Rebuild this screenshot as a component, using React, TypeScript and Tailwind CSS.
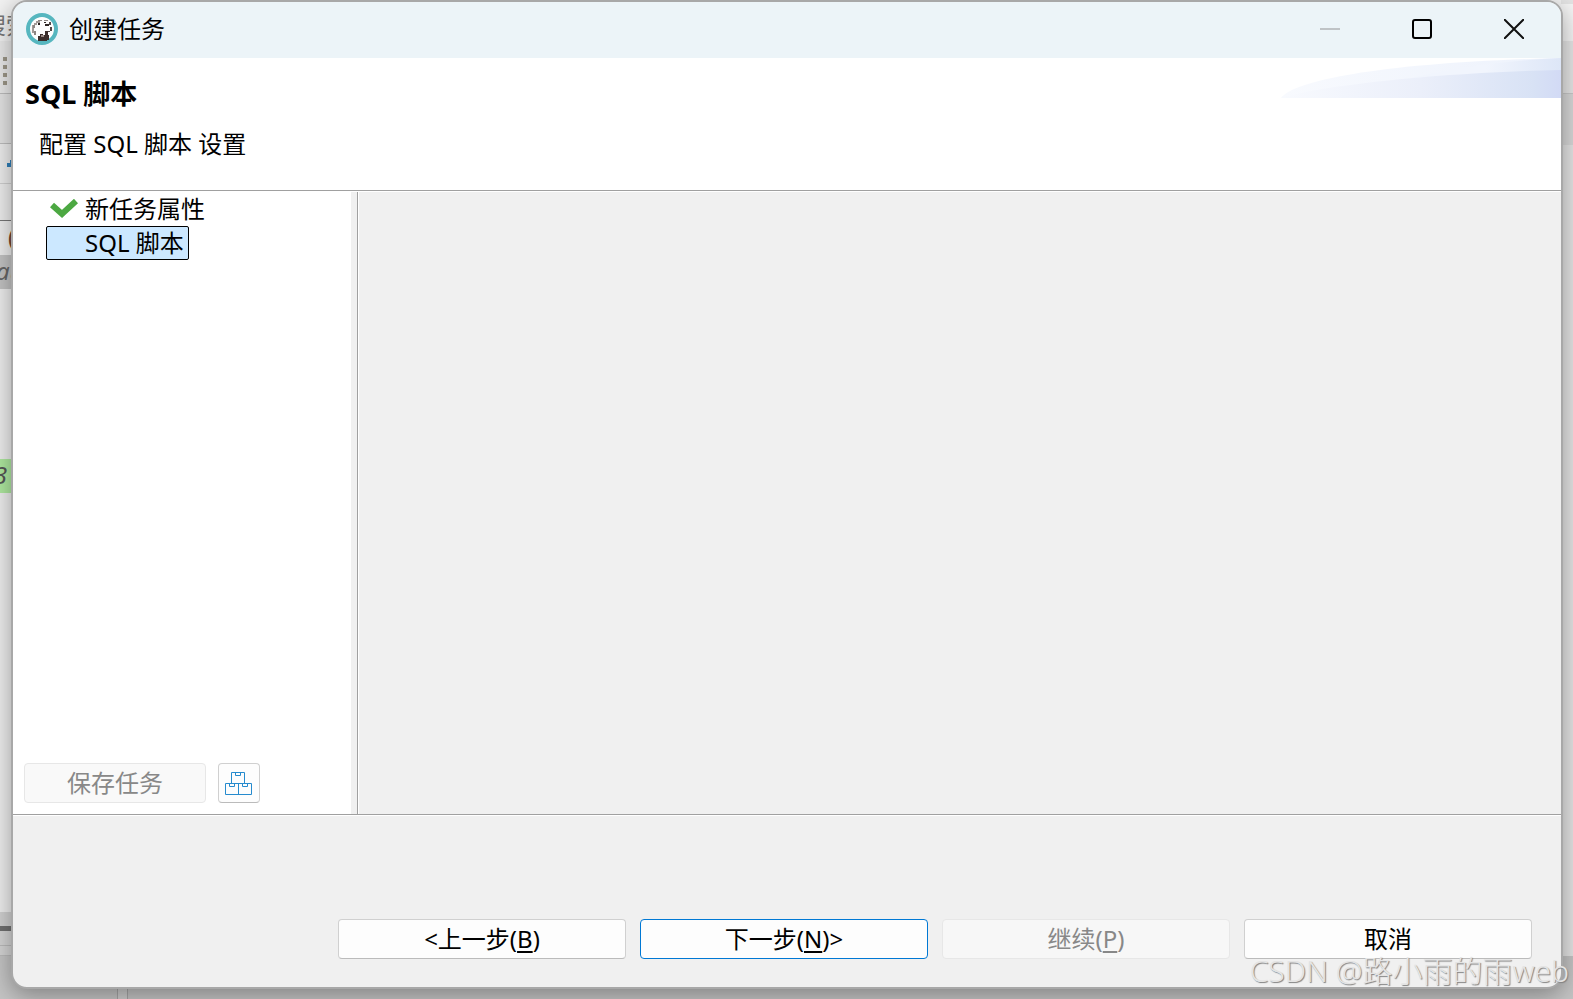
import React from 'react';

const TREE_ITEMS = [
  { label: '新任务属性', done: true },
  { label: 'SQL 脚本', done: false },
];

const FOOTER_BUTTONS = [
  { before: '<上一步(', key: 'B', after: ')', style: 'border-[#d0d0d0] border-b-[#bbbbbb] bg-[#fdfdfd]', disabled: false },
  { before: '下一步(', key: 'N', after: ')>', style: 'border-[#0078d4] bg-[#fdfdfd]', disabled: false },
  { before: '继续(', key: 'P', after: ')', style: 'border-[#e7e7e7] bg-[#f7f7f7] text-[#888888]', disabled: true },
  { before: '取消', key: '', after: '', style: 'border-[#d0d0d0] border-b-[#bbbbbb] bg-[#fdfdfd]', disabled: false },
];

const AppIcon: React.FC = () => (
  <svg width="32" height="32" viewBox="0 0 32 32" aria-hidden="true">
    <circle cx="16" cy="16" r="14" fill="#fdfdfd" stroke="#56b6bf" strokeWidth="4" />
    <path d="M6 12h2v-2h2v-2h4v2h-3v2h-2v3h-1v5h-2z" fill="#a39a97" />
    <path d="M7 12h2v3h-2zM12 7h4v1h-4zM18 7h4v1h-4zM8 18h2v4h-2z" fill="#8d8683" />
    <path d="M12 10h2v2h-2zM19 11h4v2h-4zM18 9h2v1h-2z" fill="#2d2524" />
    <path d="M12 28v-5h2v-2h3v1h2v-4h3v4h1v5h-2v1z" fill="#3b2d2b" />
    <path d="M23 9h2v3h-2zM24 14h2v4h-2zM22 18h2v1h-2z" fill="#514846" />
    <path d="M15 22h3v2h-3z" fill="#998984" />
  </svg>
);

const BoxesIcon: React.FC = () => (
  <svg width="28" height="24" viewBox="0 0 28 24" fill="none" stroke="#268bce" strokeWidth="1" aria-hidden="true">
    <path d="M6.500 12V1.500h13V12M0.500 12.500h26v11H0.500zM13.500 12.500v11" />
    <path d="M10.500 2v2.500h5V2M4.500 13v2.500h5V13M17.500 13v2.500h5V13" />
  </svg>
);

// The editor that stays visible around the dialog
const Backdrop: React.FC = () => (
  <div className="flex h-full flex-col overflow-hidden bg-[#ededed] whitespace-nowrap" aria-hidden="true">
    <div className="flex flex-1">
      <div className="flex flex-1 flex-col">
        <div className="flex h-[41px] shrink-0 items-center bg-[#f2f2f2]">
          <span className="-ml-[18px] pt-2 text-[#777777]">搜索</span>
        </div>
        <div className="flex h-[53px] shrink-0 flex-col gap-1 border-b border-[#bdbdbd] bg-[#e9e9e9] pt-4 pl-[3px]">
          <span className="size-1 bg-[#9c9788]" />
          <span className="size-1 bg-[#9c9788]" />
          <span className="size-1 bg-[#9c9788]" />
          <span className="size-1 bg-[#9c9788]" />
        </div>
        <div className="h-[50px] shrink-0 border-b border-[#bdbdbd] bg-[#e4e4e4]" />
        <div className="h-10 shrink-0 border-b border-[#cfcfcf] pt-4 pl-[7px]">
          <div className="ml-[3px] h-[3px] w-2 bg-[#2f7fb8]" />
          <div className="h-1 w-2 bg-[#2f7fb8]" />
        </div>
        <div className="h-[37px] shrink-0 border-b border-[#777777]" />
        <div className="h-[34px] shrink-0 pl-2 text-[#70452e]">(</div>
        <div className="h-[34px] shrink-0 bg-[#c2c2c2] text-[#666666] italic">
          <span className="-ml-1">au</span>
        </div>
        <div className="h-[170px] shrink-0" />
        <div className="h-[34px] shrink-0 bg-[#aee89f] text-[#555555] italic">
          <span className="-ml-[6px]">3</span>
        </div>
        <div className="flex-1" />
        <div className="h-[14px] shrink-0 bg-[#d0d0d0]" />
        <div className="h-[5px] shrink-0 bg-[#707070]" />
        <div className="h-[15px] shrink-0 border-b border-[#bababa] bg-[#d4d4d4]" />
        <div className="h-[10px] shrink-0 border-b border-[#bababa] bg-[#d4d4d4]" />
      </div>
      <div className="flex w-3 flex-col bg-[#e4e4e4]">
        <div className="h-1 bg-[#e4e4e4]" />
        <div className="h-[37px] bg-[#f5f5f5]" />
        <div className="h-[53px] border-b border-[#c8c8c8] bg-[#e6e6e6]" />
        <div className="h-[51px] bg-[#d8d8d8]" />
      </div>
    </div>
    <div className="flex h-[43px] shrink-0 bg-[#c4c4c4]">
      <div className="w-[118px] border-r border-[#a5a5a5]" />
      <div className="w-[10px] border-r border-[#a5a5a5] bg-[#cccccc]" />
    </div>
  </div>
);

const TitleBar: React.FC = () => (
  <header className="flex h-14 shrink-0 items-center bg-[#ecf4f8] pr-px pb-[2px] pl-[13px]">
    <AppIcon />
    <h1 className="ml-[11px] flex-1">创建任务</h1>
    <button type="button" disabled aria-label="最小化" className="flex h-[54px] w-[92px] items-center justify-center">
      <svg width="20" height="20" viewBox="0 0 20 20" stroke="#bfc3c6" strokeWidth="2" aria-hidden="true">
        <path d="M0 10h20" />
      </svg>
    </button>
    <button type="button" aria-label="最大化" className="flex h-[54px] w-[92px] items-center justify-center">
      <svg width="20" height="20" viewBox="0 0 20 20" fill="none" stroke="#000000" strokeWidth="2" aria-hidden="true">
        <rect x="1" y="1" width="18" height="18" rx="2" />
      </svg>
    </button>
    <button type="button" aria-label="关闭" className="flex h-[54px] w-[92px] items-center justify-center">
      <svg width="20" height="20" viewBox="0 0 20 20" stroke="#111111" strokeWidth="2" aria-hidden="true">
        <path d="M0 0l20 20M20 0L0 20" />
      </svg>
    </button>
  </header>
);

const WizardHeader: React.FC = () => (
  <section className="flex h-[133px] shrink-0 justify-between border-b border-[#a0a0a0] bg-white">
    <div className="pt-5 pl-3">
      <h2 className="text-[27px] leading-8 font-bold">SQL 脚本</h2>
      <p className="mt-[18px] pl-[14px]">配置 SQL 脚本 设置</p>
    </div>
    <svg width="280" height="40" viewBox="0 0 280 40" aria-hidden="true">
      <defs>
        <linearGradient id="outer">
          <stop offset="0" stopColor="#f8fafe" />
          <stop offset="1" stopColor="#edf2fc" />
        </linearGradient>
        <linearGradient id="middle">
          <stop offset="0.500" stopColor="#f1f5fd" />
          <stop offset="1" stopColor="#dde6f7" />
        </linearGradient>
        <linearGradient id="inner">
          <stop offset="0" stopColor="#f8fafe" />
          <stop offset="0.500" stopColor="#ebeffa" />
          <stop offset="0.900" stopColor="#d8e2f5" />
          <stop offset="1" stopColor="#d2daf5" />
        </linearGradient>
      </defs>
      <path d="M0 40C14 21 112 4 280 0V40z" fill="url(#outer)" />
      <path d="M130 20C175 9 220 3 280 0V40H130z" fill="url(#middle)" />
      <path d="M0 40C30 30 140 15 280 12V40z" fill="url(#inner)" />
    </svg>
  </section>
);

const Sidebar: React.FC = () => (
  <aside className="flex w-[338px] shrink-0 flex-col justify-between bg-white">
    <ul className="flex flex-col items-start pl-[33px]">
      {TREE_ITEMS.map((item) => (
        <li key={item.label}>
          <button
            type="button"
            className={
              item.done
                ? 'flex h-[34px] items-center px-1'
                : 'flex h-[34px] items-center rounded-xs border border-black bg-[#cce8ff] pr-1 pl-[3px]'
            }
          >
            <span className="w-[35px]">
              {item.done && (
                <svg width="28" height="20" viewBox="0 0 28 20" fill="none" stroke="#4ca842" strokeWidth="6" aria-hidden="true">
                  <path d="M2 6l10 9L26 2" />
                </svg>
              )}
            </span>
            {item.label}
          </button>
        </li>
      ))}
    </ul>
    <div className="flex gap-3 pb-[11px] pl-[11px]">
      <button type="button" disabled className="h-10 w-[182px] rounded-sm border border-[#e7e7e7] bg-[#f9f9f9] text-[#888888]">
        保存任务
      </button>
      <button
        type="button"
        aria-label="任务分组"
        className="flex h-10 w-[42px] items-center justify-center rounded-sm border border-[#d0d0d0] border-b-[#bbbbbb] bg-[#fdfdfd]"
      >
        <BoxesIcon />
      </button>
    </div>
  </aside>
);

const App: React.FC = () => {
  return (
    <div className="relative h-screen overflow-hidden font-['Noto_Sans','Noto_Sans_CJK_SC',sans-serif] text-2xl leading-8 text-black">
      <Backdrop />

      <main className="absolute top-0 right-[10px] bottom-[10px] left-[11px] flex flex-col overflow-hidden rounded-2xl border-2 border-[#a8a8a8] bg-[#f0f0f0] shadow-[0_6px_24px_rgba(0,0,0,0.35)]">
        <TitleBar />
        <WizardHeader />

        <div className="flex flex-1 border-t border-b border-t-white border-b-[#a0a0a0]">
          <Sidebar />
          <div className="ml-[6px] w-[2px] border-r border-l border-r-white border-l-[#a0a0a0]" />
          <section className="flex-1" aria-label="SQL 脚本" />
        </div>

        <footer className="flex h-[172px] shrink-0 justify-end gap-[14px] border-t border-white pt-[103px] pr-[29px]">
          {FOOTER_BUTTONS.map((button) => (
            <button
              key={button.before}
              type="button"
              disabled={button.disabled}
              className={`h-10 w-72 rounded-sm border ${button.style}`}
            >
              {button.before}
              <span className="underline underline-offset-3">{button.key}</span>
              {button.after}
            </button>
          ))}
        </footer>
      </main>

      <div className="pointer-events-none absolute right-1 bottom-2 text-[30px] leading-10 font-light text-[#e4e4e4] [text-shadow:1px_1px_1px_#808080]">
        CSDN @路小雨的雨web
      </div>
    </div>
  );
};

export default App;
